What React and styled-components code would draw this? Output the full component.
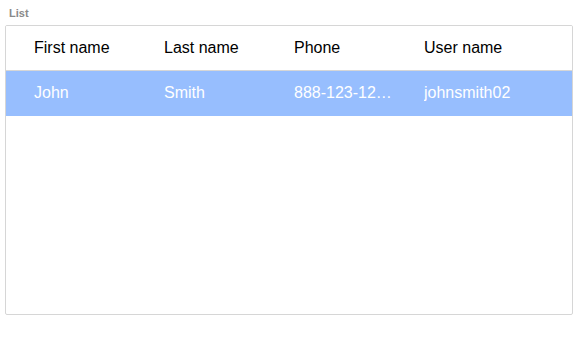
import React from 'react'
import styled, { createGlobalStyle } from 'styled-components'

const GlobalStyle = createGlobalStyle`
  html, body { margin: 0; padding: 0; background: #fff; }
  body { font-family: "Liberation Sans", Arial, sans-serif; }
`

const Page = styled.div`
  padding: 6px 5px 0 5px;
  width: 568px;
`

const Label = styled.div`
  font-size: 11px;
  font-weight: bold;
  color: #8a8a8a;
  padding-left: 4px;
  height: 14px;
  line-height: 14px;
  margin-bottom: 5px;
`

const Grid = styled.div`
  border: 1px solid #d6d6d6;
  border-radius: 2px;
  height: 288px;
  overflow: hidden;
`

const Row = styled.div`
  display: grid;
  grid-template-columns: repeat(4, 130px);
  height: 45px;
  box-sizing: border-box;
  padding-bottom: 1px;
  align-items: center;
  padding-left: 28px;
  background: ${p => (p.$selected ? '#97befe' : '#fff')};
  color: ${p => (p.$selected ? '#fff' : '#000')};
  border-bottom: ${p => (p.$header ? '1px solid #d6d6d6' : 'none')};
`

const Cell = styled.div`
  font-size: 16px;
  padding-right: 32px;
  white-space: nowrap;
  overflow: hidden;
  text-overflow: ellipsis;
`

const cols = ['First name', 'Last name', 'Phone', 'User name']
const rows = [['John', 'Smith', '888-123-1234', 'johnsmith02']]

export default function App() {
  return (
    <>
      <GlobalStyle />
      <Page>
        <Label>List</Label>
        <Grid>
          <Row $header>
            {cols.map(c => <Cell key={c}>{c}</Cell>)}
          </Row>
          {rows.map((r, i) => (
            <Row key={i} $selected>
              {r.map((v, j) => <Cell key={j}>{v}</Cell>)}
            </Row>
          ))}
        </Grid>
      </Page>
    </>
  )
}
